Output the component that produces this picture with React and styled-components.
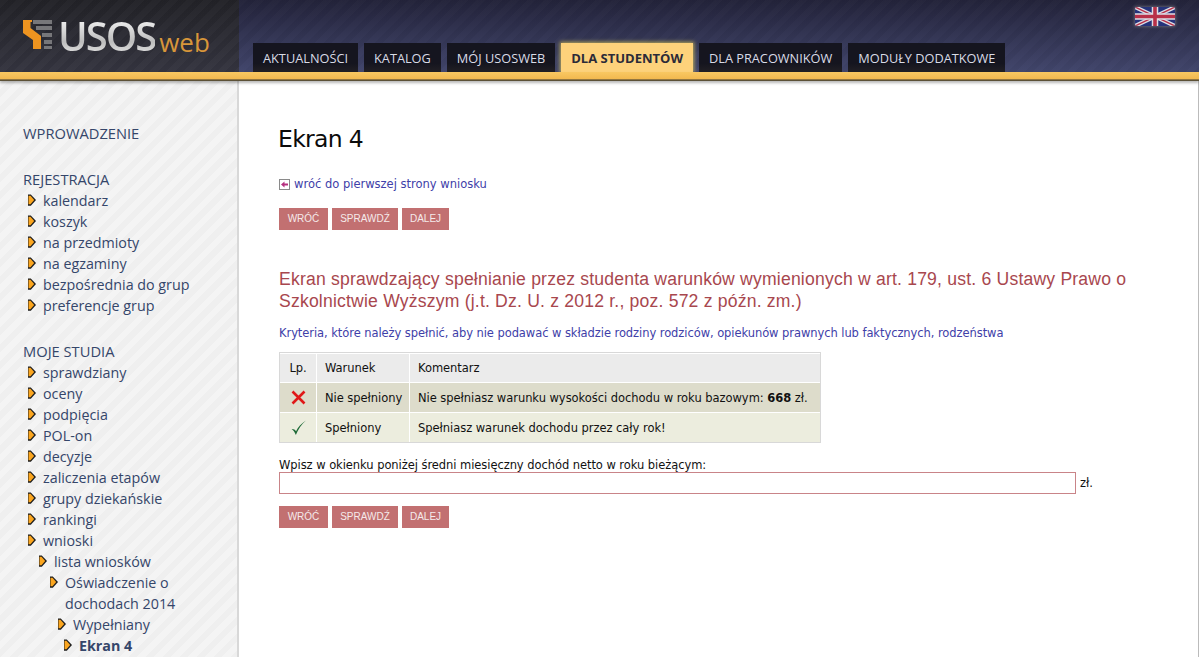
import React from 'react'
import styled, { createGlobalStyle } from 'styled-components'

const GlobalStyle = createGlobalStyle`
  html, body { margin: 0; padding: 0; height: 100%; overflow: hidden; background: #fff; }
  body { font-family: "DejaVu Sans", sans-serif; }
`

const stripes = (a, b) => `repeating-linear-gradient(135deg, ${a} 0, ${a} 6px, ${b} 6px, ${b} 12px)`

const Page = styled.div`
  width: 1199px;
  height: 657px;
  overflow: hidden;
  display: flex;
  flex-direction: column;
`
const Header = styled.header`
  display: flex;
  height: 72px;
  flex: none;
`
const LogoBox = styled.div`
  width: 239px;
  flex: none;
  box-sizing: border-box;
  padding: 17px 0 0 23px;
  display: flex;
  align-items: flex-start;
  background: ${stripes('rgba(255,255,255,0.018)', 'rgba(0,0,0,0.02)')}, linear-gradient(#222227, #34343f);
`
const LogoText = styled.span`
  font: 600 40px/38px "Open Sans", sans-serif;
  letter-spacing: -2px;
  margin-left: 5px;
  background: linear-gradient(#f6f6f6, #bcbcbc 65%, #e4e4e4);
  -webkit-background-clip: text;
  background-clip: text;
  color: transparent;
`
const LogoWeb = styled.span`
  font: 26px/26px "Open Sans", sans-serif;
  color: #d8963a;
  margin: 12px 0 0 4px;
`
const NavArea = styled.div`
  flex: 1;
  position: relative;
  display: flex;
  align-items: flex-end;
  gap: 6px;
  padding-left: 14px;
  background: ${stripes('rgba(255,255,255,0.012)', 'rgba(0,0,0,0.02)')}, linear-gradient(#23233a, #41456b);
`
const Tab = styled.a`
  height: 29px;
  box-sizing: border-box;
  padding: 0 10px;
  font: ${p => (p.$active ? '700 13px' : '400 12.75px')}/30px "Open Sans", sans-serif;
  white-space: nowrap;
  color: ${p => (p.$active ? '#2b2b38' : '#d9dbe6')};
  background: ${p => (p.$active ? '#fdd27b' : 'linear-gradient(#15151f 70%, #211f24)')};
  box-shadow: ${p => (p.$active ? '0 0 4px 1px rgba(240,220,90,0.7)' : 'none')};
`
const FlagBox = styled.svg`
  position: absolute;
  right: 24px;
  top: 7px;
  border-radius: 2px;
  box-shadow: 0 0 3px 1px rgba(120,120,130,0.65);
`
const GoldBar = styled.div`
  height: 9px;
  flex: none;
  background: linear-gradient(#f9c862, #f2b950 75%, #5c5137 88%, #5c5137);
  box-shadow: 0 2px 3px rgba(0,0,0,0.28);
  position: relative;
  z-index: 2;
`
const Body = styled.div`
  flex: 1;
  display: flex;
  min-height: 0;
`
const Sidebar = styled.nav`
  width: 239px;
  flex: none;
  box-sizing: border-box;
  padding: 42px 0 0 23px;
  border-right: 2px solid #d8d8d8;
  overflow: hidden;
  background: ${stripes('#f4f4f4', '#efefef')};
  color: #35466a;
  font: 14.3px/21px "Open Sans", sans-serif;
`
const SectionTitle = styled.div`
  text-transform: uppercase;
  font-size: 14.7px;
  margin-top: ${p => p.$gap || 0}px;
`
const MenuItem = styled.div`
  position: relative;
  padding-left: ${p => 20 + (p.$level || 0)}px;
  width: ${p => (p.$wrap ? '165px' : 'auto')};
  font-weight: ${p => (p.$current ? 700 : 400)};
  white-space: ${p => (p.$wrap ? 'normal' : 'nowrap')};
`
const BulletIcon = styled.svg`
  position: absolute;
  left: ${p => 3 + (p.$level || 0)}px;
  top: 3px;
`
const Main = styled.main`
  flex: 1;
  box-sizing: border-box;
  padding: 40px 0 0 40px;
  border-right: 1px solid #bbb;
  color: #111;
  font-size: 11.5px;
`
const Title = styled.h1`
  margin: 0 0 0 -1px;
  font: 400 23.5px/36px "DejaVu Sans", sans-serif;
  letter-spacing: -0.7px;
  color: #0b0b0b;
`
const BackLink = styled.a`
  display: flex;
  align-items: center;
  gap: 4px;
  margin-top: 18px;
  height: 18px;
  color: #4040a8;
`
const ButtonRow = styled.div`
  display: flex;
  gap: 4px;
  margin-top: ${p => p.$top}px;
`
const Btn = styled.button`
  height: 22px;
  width: ${p => p.$w}px;
  padding: 0 0 1px;
  border: 0;
  background: #c27071;
  color: #f5eaea;
  font: 10px/21px "Liberation Sans", sans-serif;
  text-transform: uppercase;
`
const Heading = styled.h2`
  margin: 38px 0 0;
  width: 880px;
  font: 400 17.6px/22px "Liberation Sans", sans-serif;
  letter-spacing: 0.19px;
  color: #a8474e;
`
const Criteria = styled.div`
  margin-top: 12px;
  line-height: 18px;
  color: #4040a8;
  letter-spacing: -0.07px;
  white-space: nowrap;
`
const Table = styled.table`
  margin-top: 10px;
  width: 542px;
  height: 91px;
  border: 1px solid #d8d8d8;
  border-collapse: separate;
  border-spacing: 0;
  letter-spacing: -0.04px;
`
const Row = styled.tr`
  background: ${p => p.$bg};
  height: ${p => p.$h}px;
`
const Cell = styled.td`
  padding: ${p => (p.$center ? '0' : '0 0 0 8px')};
  border-left: ${p => (p.$first ? 0 : '1px solid #fff')};
  border-top: 1px solid #fff;
  white-space: nowrap;
  text-align: ${p => (p.$center ? 'center' : 'left')};
  width: ${p => (p.$w ? p.$w + 'px' : 'auto')};
  svg { display: block; margin: 0 auto; }
`
const FieldLabel = styled.div`
  margin-top: 16px;
  line-height: 13px;
  letter-spacing: -0.06px;
`
const FieldRow = styled.div`
  display: flex;
  align-items: center;
  gap: 4px;
`
const AmountInput = styled.input`
  width: 797px;
  height: 22px;
  box-sizing: border-box;
  border: 1px solid #c98488;
  background: #fff;
  padding: 0 3px;
`

function Bullet({ level }) {
  return (
    <BulletIcon $level={level} width="11" height="14" viewBox="0 0 11 14">
      <path d="M2 1.5h2.8L10 7l-5.2 5.8H2z" fill="#1d1d1d" />
      <path d="M2.5 2.8h2L8.2 7 4.5 11.2h-2z" fill="#fba61f" />
    </BulletIcon>
  )
}

function Logo() {
  return (
    <svg width="30" height="30" viewBox="0 0 30 30" style={{ flex: 'none', marginTop: 3 }}>
      <path d="M0 0h9v2H7.5v6L18 16v13H10V20L0 13z" fill="#ee9420" />
      <path d="M10 0h19v4H10zM13 6h16v4H13zM19 13h10v4H19zM21 20h8v4H21zM21 26h8v3H21z" fill="#77777a" />
    </svg>
  )
}

function Flag() {
  return (
    <FlagBox width="40" height="19" viewBox="0 0 40 19">
      <rect width="40" height="19" fill="#26337a" />
      <path d="M0 0 40 19M40 0 0 19" stroke="#dcdce4" strokeWidth="4" />
      <path d="M0 0 40 19M40 0 0 19" stroke="#b83048" strokeWidth="1.4" />
      <path d="M20 0v19M0 9.5h40" stroke="#dcdce4" strokeWidth="6.5" />
      <path d="M20 0v19M0 9.5h40" stroke="#b83048" strokeWidth="3.6" />
    </FlagBox>
  )
}

function BackIcon() {
  return (
    <svg width="11" height="11" viewBox="0 0 11 11" style={{ flex: 'none' }}>
      <rect x="0.5" y="0.5" width="10" height="10" fill="#fff" stroke="#8a8a8a" />
      <path d="M2 5.5 5.5 2.5v2H9v2H5.5v2z" fill="#b5307f" />
    </svg>
  )
}

const Buttons = ({ top }) => (
  <ButtonRow $top={top}>
    <Btn $w={49}>Wróć</Btn>
    <Btn $w={66}>Sprawdź</Btn>
    <Btn $w={47}>Dalej</Btn>
  </ButtonRow>
)

const registration = ['kalendarz', 'koszyk', 'na przedmioty', 'na egzaminy', 'bezpośrednia do grup', 'preferencje grup']
const studies = ['sprawdziany', 'oceny', 'podpięcia', 'POL-on', 'decyzje', 'zaliczenia etapów', 'grupy dziekańskie', 'rankingi', 'wnioski']
const tabs = ['Aktualności', 'Katalog', 'Mój USOSweb', 'Dla studentów', 'Dla pracowników', 'Moduły dodatkowe']

export default function App() {
  return (
    <Page>
      <GlobalStyle />
      <Header>
        <LogoBox>
          <Logo />
          <LogoText>USOS</LogoText>
          <LogoWeb>web</LogoWeb>
        </LogoBox>
        <NavArea>
          {tabs.map(t => (
            <Tab key={t} $active={t === 'Dla studentów'}>{t.toUpperCase()}</Tab>
          ))}
          <Flag />
        </NavArea>
      </Header>
      <GoldBar />
      <Body>
        <Sidebar>
          <SectionTitle>Wprowadzenie</SectionTitle>
          <SectionTitle $gap={25}>Rejestracja</SectionTitle>
          {registration.map(m => <MenuItem key={m}><Bullet />{m}</MenuItem>)}
          <SectionTitle $gap={25}>Moje studia</SectionTitle>
          {studies.map(m => <MenuItem key={m}><Bullet />{m}</MenuItem>)}
          <MenuItem $level={11}><Bullet level={11} />lista wniosków</MenuItem>
          <MenuItem $level={22} $wrap><Bullet level={22} />Oświadczenie o dochodach 2014</MenuItem>
          <MenuItem $level={30}><Bullet level={30} />Wypełniany</MenuItem>
          <MenuItem $level={36} $current><Bullet level={36} />Ekran 4</MenuItem>
        </Sidebar>
        <Main>
          <Title>Ekran 4</Title>
          <BackLink><BackIcon />wróć do pierwszej strony wniosku</BackLink>
          <Buttons top={15} />
          <Heading>Ekran sprawdzający spełnianie przez studenta warunków wymienionych w art. 179, ust. 6 Ustawy Prawo o Szkolnictwie Wyższym (j.t. Dz. U. z 2012 r., poz. 572 z późn. zm.)</Heading>
          <Criteria>Kryteria, które należy spełnić, aby nie podawać w składzie rodziny rodziców, opiekunów prawnych lub faktycznych, rodzeństwa</Criteria>
          <Table>
            <tbody>
              <Row $bg="#ebebeb" $h={29}>
                <Cell $first $center $w={36}>Lp.</Cell>
                <Cell $w={84}>Warunek</Cell>
                <Cell>Komentarz</Cell>
              </Row>
              <Row $bg="#dddccb" $h={30}>
                <Cell $first $center>
                  <svg width="15" height="15" viewBox="0 0 15 15">
                    <path d="M1.5 1.5 13.5 13.5M13.5 1.5 1.5 13.5" stroke="#e01818" strokeWidth="2.6" />
                  </svg>
                </Cell>
                <Cell>Nie spełniony</Cell>
                <Cell>Nie spełniasz warunku wysokości dochodu w roku bazowym: <b>668</b> zł.</Cell>
              </Row>
              <Row $bg="#ecedde" $h={30}>
                <Cell $first $center>
                  <svg width="17" height="17" viewBox="0 0 16 16">
                    <path d="M1.5 9.5C3 10.5 4.5 12.5 5.5 15 7.5 10 11 5 15 1.5 10.5 4.5 7.5 8 5.7 11.5 4.7 10.2 3.2 9.3 1.5 9.5z" fill="#1f6b38" />
                  </svg>
                </Cell>
                <Cell>Spełniony</Cell>
                <Cell>Spełniasz warunek dochodu przez cały rok!</Cell>
              </Row>
            </tbody>
          </Table>
          <FieldLabel>Wpisz w okienku poniżej średni miesięczny dochód netto w roku bieżącym:</FieldLabel>
          <FieldRow>
            <AmountInput />
            <span>zł.</span>
          </FieldRow>
          <Buttons top={12} />
        </Main>
      </Body>
    </Page>
  )
}
